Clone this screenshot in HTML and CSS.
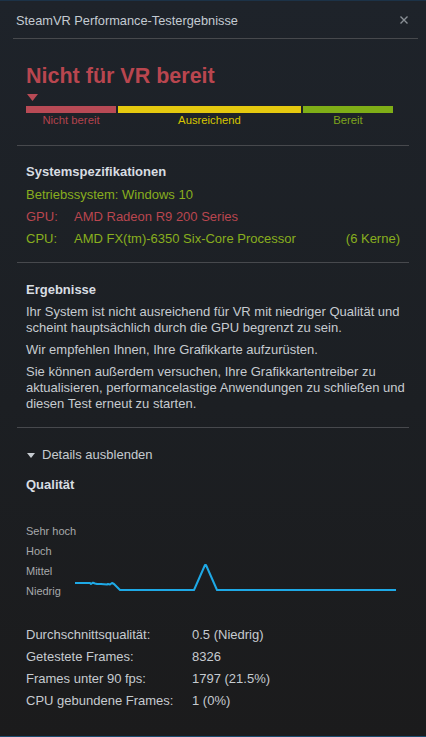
FILE: index.html
```html
<!DOCTYPE html>
<html lang="de">
<head>
<meta charset="utf-8">
<title>SteamVR Performance-Testergebnisse</title>
<link rel="stylesheet" href="styles.css">
</head>
<body>
<div class="window">
  <header class="titlebar">
    <span class="title">SteamVR Performance-Testergebnisse</span>
    <svg class="close" width="8" height="8" viewBox="0 0 8 8"><path d="M0.5 0.5 L7.5 7.5 M7.5 0.5 L0.5 7.5" stroke="#8a9096" stroke-width="1.4" fill="none"/></svg>
  </header>
  <main class="content">
    <section class="status">
      <h1 class="verdict">Nicht für VR bereit</h1>
      <svg class="marker" width="11" height="7" viewBox="0 0 11 7"><path d="M0 0 H11 L5.5 7 Z" fill="#b84a55"/></svg>
      <div class="scale">
        <div class="seg seg-red"><div class="bar"></div><span class="lbl">Nicht bereit</span></div>
        <div class="seg seg-yellow"><div class="bar"></div><span class="lbl">Ausreichend</span></div>
        <div class="seg seg-green"><div class="bar"></div><span class="lbl">Bereit</span></div>
      </div>
    </section>
    <hr class="sep">
    <section class="block specs">
      <h2 class="head">Systemspezifikationen</h2>
      <div class="row good">Betriebssystem: Windows 10</div>
      <div class="row spec bad"><span class="key">GPU:</span><span>AMD Radeon R9 200 Series</span></div>
      <div class="row spec good"><span class="key">CPU:</span><span>AMD FX(tm)-6350 Six-Core Processor</span><span class="cores">(6 Kerne)</span></div>
    </section>
    <hr class="sep">
    <section class="block results">
      <h2 class="head">Ergebnisse</h2>
      <p>Ihr System ist nicht ausreichend für VR mit niedriger Qualität und<br>scheint hauptsächlich durch die GPU begrenzt zu sein.</p>
      <p>Wir empfehlen Ihnen, Ihre Grafikkarte aufzurüsten.</p>
      <p>Sie können außerdem versuchen, Ihre Grafikkartentreiber zu<br>aktualisieren, performancelastige Anwendungen zu schließen und<br>diesen Test erneut zu starten.</p>
    </section>
    <hr class="sep">
    <section class="block details">
      <div class="toggle"><svg class="tri" width="8" height="5" viewBox="0 0 8 5"><path d="M0 0 H8 L4 5 Z" fill="#c6cbd0"/></svg>Details ausblenden</div>
      <h2 class="head quality">Qualität</h2>
      <div class="chart">
        <div class="levels">
          <span>Sehr hoch</span>
          <span>Hoch</span>
          <span>Mittel</span>
          <span>Niedrig</span>
        </div>
        <svg class="plot" width="321" height="80" viewBox="0 0 321 80">
          <polyline fill="none" stroke="#1ea9e6" stroke-width="2" stroke-linejoin="round" points="0,62 15,62 16,63 18,61.7 20,62.5 22,63 26,63 32,63.5 33,63 35,63.5 37,62 39,63 41,65 44,68 45,69 119,69 130,44 131,44 142,69 321,69"/>
        </svg>
      </div>
      <div class="stats">
        <span>Durchschnittsqualität:</span><span>0.5 (Niedrig)</span>
        <span>Getestete Frames:</span><span>8326</span>
        <span>Frames unter 90 fps:</span><span>1797 (21.5%)</span>
        <span>CPU gebundene Frames:</span><span>1 (0%)</span>
      </div>
    </section>
  </main>
</div>
</body>
</html>
```
FILE: styles.css
```css
html, body {
  margin: 0;
  padding: 0;
}
body {
  width: 426px;
  height: 737px;
  background: linear-gradient(180deg, #1e232a 0%, #1c1f23 55%, #1b1b1c 100%);
  font-family: "Liberation Sans", Arial, sans-serif;
  font-size: 13px;
  color: #c6cbd0;
  overflow: hidden;
}
.window {
  box-sizing: border-box;
  height: 737px;
  border-top: 1px solid #1c3247;
  border-bottom: 1px solid #1d4d70;
}
.titlebar {
  display: flex;
  align-items: center;
  justify-content: space-between;
  margin: 0 8px 0 13px;
  padding: 1px 10px 0 3px;
  box-sizing: border-box;
  border-bottom: 1px solid #47494d;
  height: 38px;
}
.title {
  font-size: 12.8px;
  color: #c4cbd2;
}
.close {
  display: block;
}
.content {
  padding: 0 26px;
}
.status {
  padding-top: 25px;
  padding-bottom: 18px;
}
.verdict {
  margin: 0;
  font-size: 21.5px;
  line-height: 24px;
  font-weight: bold;
  color: #b9464f;
}
.marker {
  display: block;
  margin: 6px 0 5px 1px;
}
.scale {
  display: flex;
  gap: 2px;
  width: 367px;
}
.seg {
  display: flex;
  flex-direction: column;
  align-items: center;
}
.seg-red, .seg-green { width: 90px; }
.seg-yellow { width: 183px; }
.bar {
  align-self: stretch;
  height: 7px;
}
.seg-red .bar { background: #b84a55; }
.seg-yellow .bar { background: #e5c90f; }
.seg-green .bar { background: #7fae17; }
.lbl {
  font-size: 11.3px;
  line-height: 14px;
}
.seg-red .lbl { color: #b2434d; }
.seg-yellow .lbl { color: #d6c500; }
.seg-green .lbl { color: #7ea41c; }
.sep {
  margin: 0 -9px;
  border: 0;
  height: 1px;
  background: #47494d;
}
.block {
  padding-top: 15px;
}
.head {
  margin: 0;
  font-size: 13px;
  line-height: 22px;
  font-weight: bold;
  color: #d8dde2;
}
.row {
  line-height: 22px;
}
.specs .row:first-of-type {
  margin-top: 1px;
}
.spec {
  display: flex;
}
.key {
  width: 48px;
}
.cores {
  margin-left: auto;
}
.good { color: #88ae1e; }
.bad { color: #b9464f; }
.specs { padding-bottom: 12px; }
.results p {
  margin: 3px 0 0;
  line-height: 16px;
  white-space: nowrap;
}
.results p + p { margin-top: 6px; }
.results { padding-top: 16px; padding-bottom: 15px; }
.details { padding-top: 16px; }
.toggle {
  display: flex;
  align-items: center;
  line-height: 22px;
}
.tri {
  margin: 1px 7px 0 1px;
}
.quality {
  margin-top: 8px;
}
.chart {
  display: flex;
  margin-top: 25px;
}
.levels {
  display: flex;
  flex-direction: column;
  width: 49px;
  font-size: 11px;
  line-height: 20px;
  color: #a7a9ab;
  white-space: nowrap;
}
.plot {
  display: block;
}
.stats {
  display: grid;
  grid-template-columns: 166px 1fr;
  line-height: 22px;
  margin-top: 23px;
}
```
